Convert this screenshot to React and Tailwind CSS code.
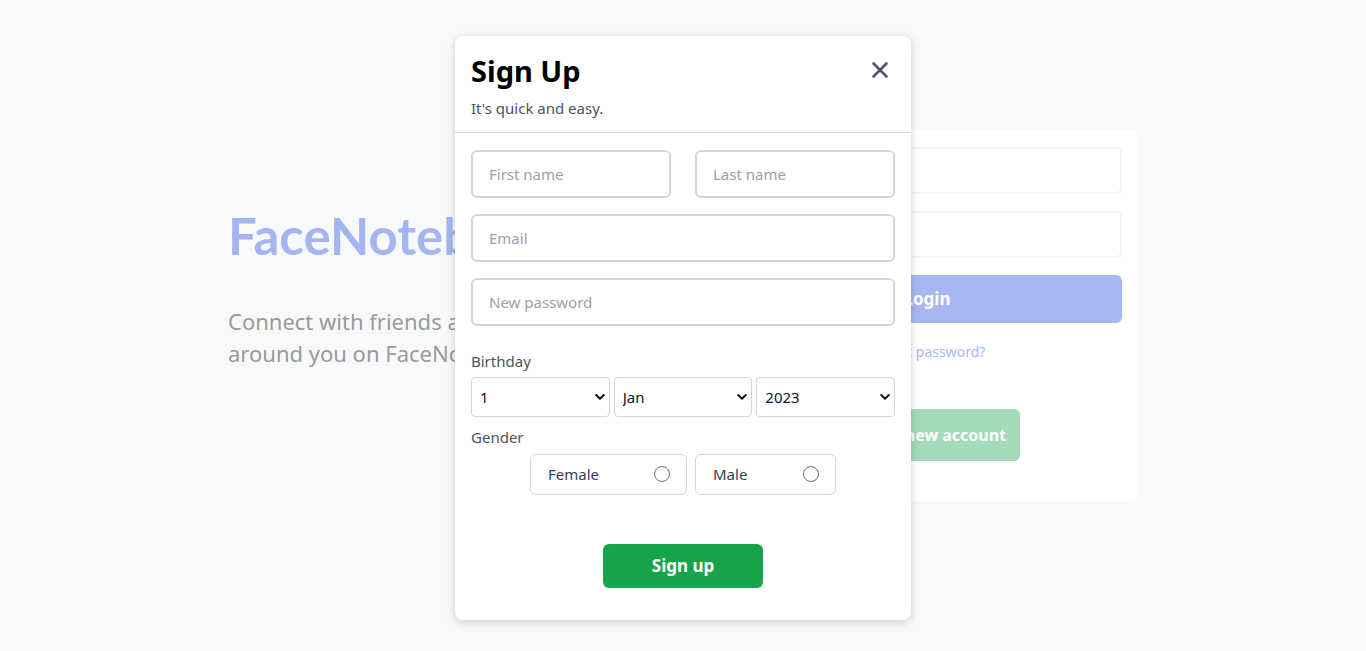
import React from 'react';
import { X } from 'lucide-react';

const font = { fontFamily: '"Noto Sans", "Open Sans", sans-serif' };

const Select = ({ value, options }) => (
  <div className="relative flex-1">
    <select
      defaultValue={value}
      className="w-full h-10 appearance-none rounded border border-gray-300 bg-white pl-2 pr-6 text-[15px] text-gray-900 outline-none"
    >
      {options.map((o) => (
        <option key={o}>{o}</option>
      ))}
    </select>
    <svg className="pointer-events-none absolute right-[5px] top-1/2 -translate-y-1/2" width="10" height="7" viewBox="0 0 10 7">
      <path d="M1.2 1.5 L5 5.2 L8.8 1.5" fill="none" stroke="#111" strokeWidth="2" strokeLinecap="round" strokeLinejoin="round" />
    </svg>
  </div>
);

const Radio = ({ label, width }) => (
  <label className={`flex h-[41px] items-center justify-between rounded-md border border-gray-300 pl-[17px] pr-4 text-[15px] text-gray-700 ${width}`}>
    <span>{label}</span>
    <span className="h-4 w-4 rounded-full border border-gray-500" />
  </label>
);

export default function App() {
  return (
    <div className="relative min-h-screen bg-[#f8f9fb]" style={font}>
      {/* login page behind the modal, faded */}
      <div className="mx-auto flex w-[910px] items-start justify-between pt-[130px]">
        <div className="pt-[80px]">
          <h1 className="font-['Lato',sans-serif] text-[51px] font-bold leading-none text-[#a5b5f1]">FaceNotebook</h1>
          <p className="mt-[44px] w-[420px] text-[22px] leading-[32px] text-[#9c9a98]">
            Connect with friends and the world around you on FaceNotebook.
          </p>
        </div>
        <div className="flex w-[422px] flex-col items-center rounded-lg bg-white px-4 pb-10 pt-[17px]">
          <div className="h-[47px] w-full rounded-md border-2 border-gray-100" />
          <div className="mt-[17px] h-[47px] w-full rounded-md border-2 border-gray-100" />
          <div className="mt-[17px] flex h-[48px] w-full items-center justify-center rounded-md bg-[#a7b8f0] text-[17px] font-bold text-white">
            Login
          </div>
          <div className="mt-[18px] text-[14px] text-[#a7b8f0]">Forgot password?</div>
          <div className="mt-[47px] flex h-[52px] w-[186px] items-center justify-center rounded-md bg-[#a3dab7] text-[16px] font-bold text-white">
            Create new account
          </div>
        </div>
      </div>

      {/* modal */}
      <div className="absolute inset-0 flex justify-center pt-9">
        <div className="h-[584px] w-[456px] rounded-lg bg-white shadow-[0_2px_8px_rgba(0,0,0,0.18)]">
          <div className="relative border-b border-slate-300 px-4 pb-[12px] pt-[15px]">
            <h2 className="text-[29px] font-bold leading-10 text-black">Sign Up</h2>
            <p className="mt-[6px] text-[15px] text-gray-600">It's quick and easy.</p>
            <button className="absolute right-[18px] top-[21px] text-gray-600">
              <X size={26} strokeWidth={2.4} />
            </button>
          </div>
          <div className="px-4 pt-[17px]">
            <div className="flex justify-between">
              <input placeholder="First name" className="h-12 w-[200px] rounded-md border-2 border-gray-300 px-4 text-[15px] outline-none placeholder:text-gray-400" />
              <input placeholder="Last name" className="h-12 w-[200px] rounded-md border-2 border-gray-300 px-4 text-[15px] outline-none placeholder:text-gray-400" />
            </div>
            <input placeholder="Email" className="mt-4 h-12 w-full rounded-md border-2 border-gray-300 px-4 text-[15px] outline-none placeholder:text-gray-400" />
            <input placeholder="New password" className="mt-4 h-12 w-full rounded-md border-2 border-gray-300 px-4 text-[15px] outline-none placeholder:text-gray-400" />

            <div className="mt-[24px] text-[15px] text-gray-600">Birthday</div>
            <div className="mt-[5px] flex gap-1">
              <Select value="1" options={['1', '2', '3']} />
              <Select value="Jan" options={['Jan', 'Feb', 'Mar']} />
              <Select value="2023" options={['2023', '2022', '2021']} />
            </div>

            <div className="mt-[9px] text-[15px] text-gray-600">Gender</div>
            <div className="mt-[5px] flex justify-center gap-2">
              <Radio label="Female" width="w-[157px]" />
              <Radio label="Male" width="w-[141px]" />
            </div>

            <div className="mt-[49px] flex justify-center">
              <button className="h-[44px] w-[160px] rounded-md bg-[#16a34a] text-[17px] font-bold text-white">
                Sign up
              </button>
            </div>
          </div>
        </div>
      </div>
    </div>
  );
}
